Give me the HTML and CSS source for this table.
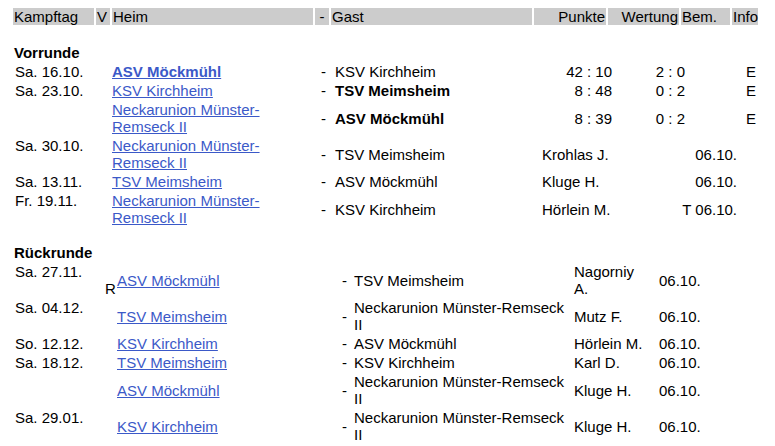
FILE: index.html
```html
<!DOCTYPE html>
<html lang="de">
<head>
<meta charset="utf-8">
<title>Kampfplan</title>
<link rel="stylesheet" href="styles.css">
</head>
<body>
<div class="page">
  <div class="title-clip"><h1 class="title">Kampfplan der Bezirksliga Gruppe Nord – Saison 2021/2022 (Begegnungen)</h1></div>

  <div class="head">
    <div class="h">Kampftag</div>
    <div class="h">V</div>
    <div class="h">Heim</div>
    <div class="h center">-</div>
    <div class="h">Gast</div>
    <div class="h right">Punkte</div>
    <div class="h right">Wertung</div>
    <div class="h">Bem.</div>
    <div class="h">Info</div>
  </div>

  <section class="round vor">
    <div class="round-title">Vorrunde</div>

    <div class="m">
      <div class="d">Sa. 16.10.</div><div class="v"></div>
      <div class="heim"><a href="#" class="b">ASV Möckmühl</a></div>
      <div class="dash">-</div><div class="gast">KSV Kirchheim</div>
      <div class="pkt">42 : 10</div><div class="wert">2 : 0</div><div class="bem"></div><div class="info">E</div>
    </div>
    <div class="m">
      <div class="d">Sa. 23.10.</div><div class="v"></div>
      <div class="heim"><a href="#">KSV Kirchheim</a></div>
      <div class="dash">-</div><div class="gast b">TSV Meimsheim</div>
      <div class="pkt">8 : 48</div><div class="wert">0 : 2</div><div class="bem"></div><div class="info">E</div>
    </div>
    <div class="m">
      <div class="d"></div><div class="v"></div>
      <div class="heim"><a href="#">Neckarunion Münster-Remseck II</a></div>
      <div class="dash">-</div><div class="gast b">ASV Möckmühl</div>
      <div class="pkt">8 : 39</div><div class="wert">0 : 2</div><div class="bem"></div><div class="info">E</div>
    </div>
    <div class="m">
      <div class="d">Sa. 30.10.</div><div class="v"></div>
      <div class="heim"><a href="#">Neckarunion Münster-Remseck II</a></div>
      <div class="dash">-</div><div class="gast">TSV Meimsheim</div>
      <div class="ref">Krohlas J.</div><div class="date">06.10.</div>
    </div>
    <div class="m">
      <div class="d">Sa. 13.11.</div><div class="v"></div>
      <div class="heim"><a href="#">TSV Meimsheim</a></div>
      <div class="dash">-</div><div class="gast">ASV Möckmühl</div>
      <div class="ref">Kluge H.</div><div class="date">06.10.</div>
    </div>
    <div class="m">
      <div class="d">Fr. 19.11.</div><div class="v"></div>
      <div class="heim"><a href="#">Neckarunion Münster-Remseck II</a></div>
      <div class="dash">-</div><div class="gast">KSV Kirchheim</div>
      <div class="ref">Hörlein M.</div><div class="date">T 06.10.</div>
    </div>
  </section>

  <section class="round rueck">
    <div class="round-title">Rückrunde</div>

    <div class="m">
      <div class="d">Sa. 27.11.</div><div class="v">R</div>
      <div class="heim"><a href="#">ASV Möckmühl</a></div>
      <div class="dash">-</div><div class="gast">TSV Meimsheim</div>
      <div class="ref">Nagorniy A.</div><div class="date">06.10.</div>
    </div>
    <div class="m">
      <div class="d">Sa. 04.12.</div><div class="v"></div>
      <div class="heim"><a href="#">TSV Meimsheim</a></div>
      <div class="dash">-</div><div class="gast">Neckarunion Münster-Remseck II</div>
      <div class="ref">Mutz F.</div><div class="date">06.10.</div>
    </div>
    <div class="m">
      <div class="d">So. 12.12.</div><div class="v"></div>
      <div class="heim"><a href="#">KSV Kirchheim</a></div>
      <div class="dash">-</div><div class="gast">ASV Möckmühl</div>
      <div class="ref">Hörlein M.</div><div class="date">06.10.</div>
    </div>
    <div class="m">
      <div class="d">Sa. 18.12.</div><div class="v"></div>
      <div class="heim"><a href="#">TSV Meimsheim</a></div>
      <div class="dash">-</div><div class="gast">KSV Kirchheim</div>
      <div class="ref">Karl D.</div><div class="date">06.10.</div>
    </div>
    <div class="m">
      <div class="d"></div><div class="v"></div>
      <div class="heim"><a href="#">ASV Möckmühl</a></div>
      <div class="dash">-</div><div class="gast">Neckarunion Münster-Remseck II</div>
      <div class="ref">Kluge H.</div><div class="date">06.10.</div>
    </div>
    <div class="m">
      <div class="d">Sa. 29.01.</div><div class="v"></div>
      <div class="heim"><a href="#">KSV Kirchheim</a></div>
      <div class="dash">-</div><div class="gast">Neckarunion Münster-Remseck II</div>
      <div class="ref">Kluge H.</div><div class="date">06.10.</div>
    </div>
  </section>
</div>
</body>
</html>
```

FILE: styles.css
```css
html, body {
  margin: 0;
  padding: 0;
  background: #ffffff;
}

body {
  font-family: "Liberation Sans", Arial, sans-serif;
  font-size: 15px;
  line-height: 17px;
  color: #000000;
}

.page {
  padding-left: 13px;
  width: 750px;
}

.title-clip {
  height: 3px;
  overflow: hidden;
}

.title {
  margin: -20px 0 0 100px;
  font-size: 18px;
  line-height: 21px;
  font-weight: bold;
  white-space: nowrap;
}

/* header bar */
.head {
  margin-top: 5px;
  display: grid;
  grid-template-columns: 81px 14px 201px 14px 201px 72px 71px 49px 26px;
  column-gap: 2px;
}

.h {
  background: #cccccc;
  padding: 0 1px;
  height: 17px;
  white-space: nowrap;
}

.h.right { text-align: right; }
.h.center { text-align: center; padding: 0; }

/* rounds */
.round {
  display: flex;
  flex-direction: column;
  row-gap: 2px;
}

.vor { margin-top: 19px; }
.rueck { margin-top: 18px; }

.round-title {
  font-weight: bold;
  padding-left: 1px;
}

.m {
  display: grid;
  column-gap: 2px;
  align-items: center;
}

.vor .m {
  grid-template-columns: 81px 14px 201px 14px 207px 74px 72px 48px 20px;
}

.rueck .m {
  grid-template-columns: 89px 11px 221px 10px 218px 74px 72px;
}

.d {
  align-self: start;
  padding-left: 2px;
  white-space: nowrap;
}

.v {
  align-self: end;
  padding-left: 1px;
}

.heim { padding-left: 0; }

a {
  color: #3b59c8;
  text-decoration: underline;
}

.b { font-weight: bold; }

.dash {
  text-align: right;
  padding-right: 3px;
}

.vor .gast { padding-left: 4px; }
.rueck .gast { padding-left: 2px; }

.pkt {
  text-align: right;
  padding-right: 2px;
  white-space: nowrap;
}

.wert {
  text-align: right;
  padding-right: 3px;
  white-space: nowrap;
}

.info { padding-left: 6px; }

.ref { padding-left: 2px; }

.vor .date {
  grid-column: 7 / 9;
  text-align: right;
  padding-right: 1px;
}

.rueck .date {
  padding-left: 11px;
}
```
